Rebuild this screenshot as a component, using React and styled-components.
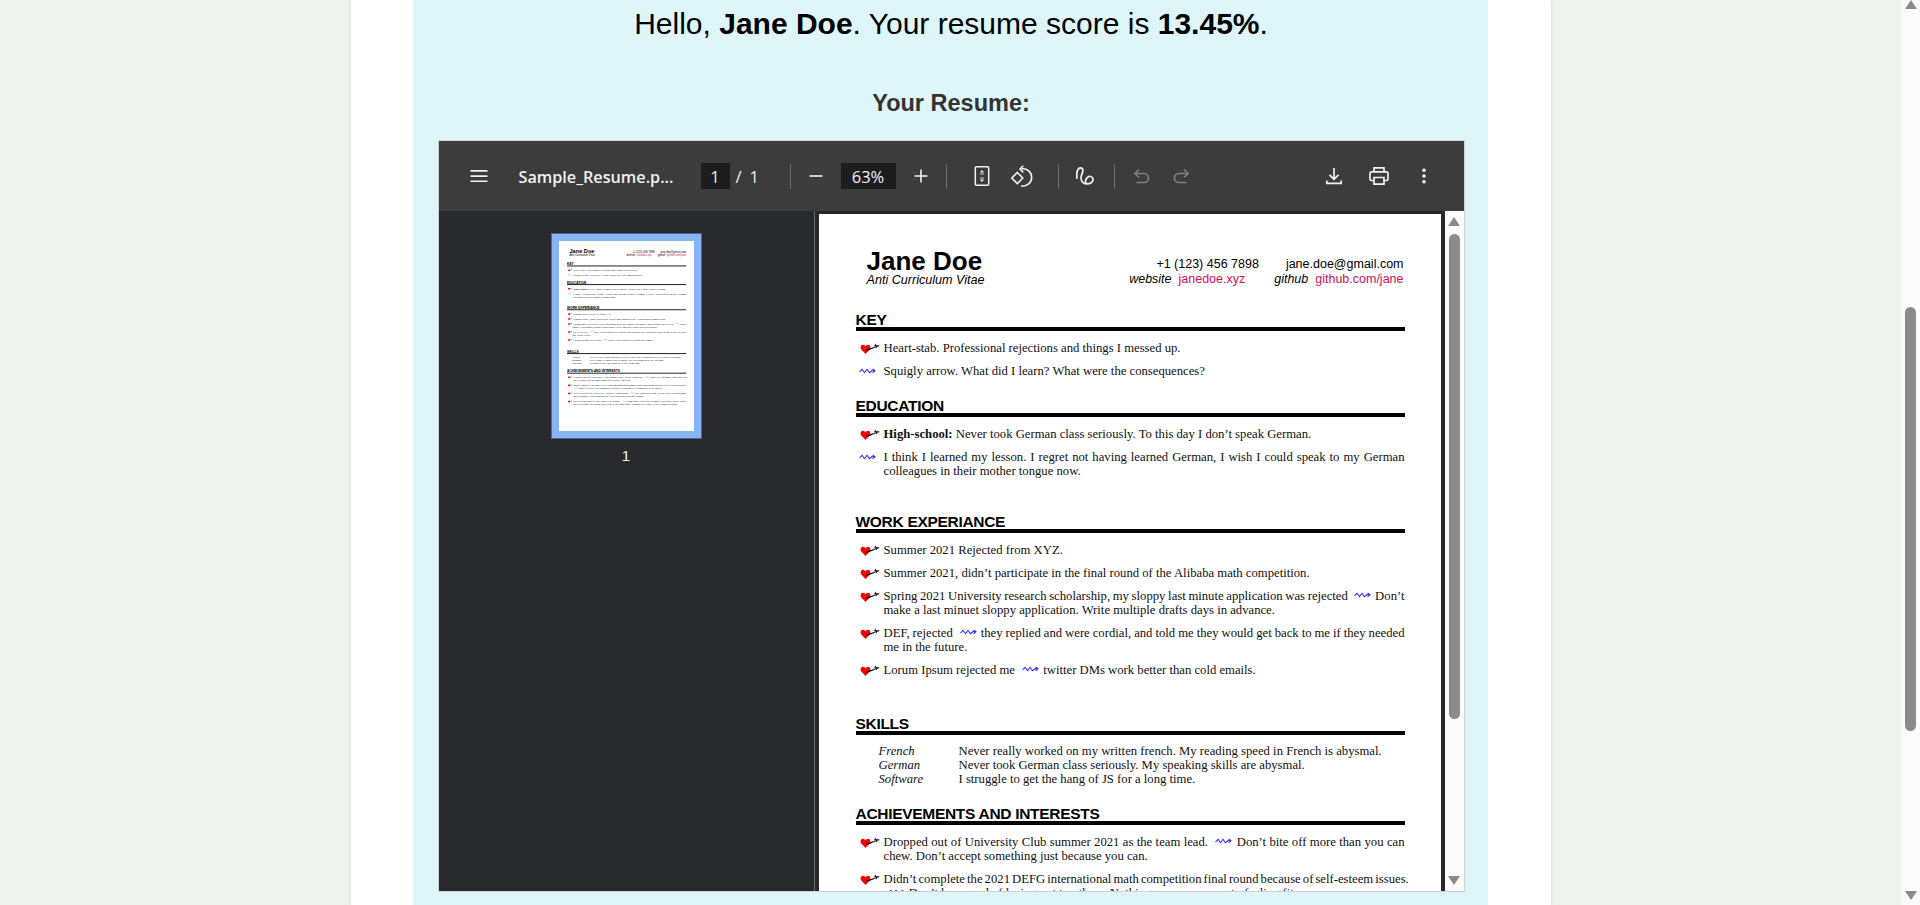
import React from 'react'
import styled, { createGlobalStyle } from 'styled-components'

const GlobalStyle = createGlobalStyle`
    html, body {
        margin: 0;
        padding: 0;
        height: 100%;
        overflow: hidden;
    }
    body {
        font-family: "Liberation Sans", Arial, sans-serif;
    }
`

const Heart = () => (
    <HeartSvg viewBox="0 0 20 14">
        <path d="M5.500 13 1.300 8.500C-.2 6.500.8 3.800 3 3.800c1.200 0 2 .8 2.500 1.800C6 4.600 6.800 3.800 8 3.800c2.200 0 3.200 2.700 1.700 4.700z" fill="#f40000" />
        <path d="M6.500 9.300 14 6.500" stroke="#000" strokeWidth="1.300" fill="none" />
        <path d="M14 6.500 19.300 4.700" stroke="#000" strokeWidth=".8" fill="none" />
        <path d="M15.300 2.800 16.700 7.200M13.800 4.800l4.800-.2" stroke="#000" strokeWidth=".8" fill="none" />
    </HeartSvg>
)

const Squiggle = ({ inline }) => (
    <SquiggleSvg viewBox="0 0 17 8" $inline={inline}>
        <path d="M.5 5 3 2.300 5.500 5.700 8 2.300 10.500 5.700 13 3.600 15.500 3.800" stroke="#2a22ff" strokeWidth="1.050" fill="none" />
        <path d="M13.600 1.800 16 3.800 13.600 5.800" stroke="#2a22ff" strokeWidth="1.050" fill="none" />
    </SquiggleSvg>
)

const HeartSvg = styled.svg`
    width: 20px;
    height: 14px;
    display: block;
`
const SquiggleSvg = styled.svg`
    width: 17px;
    height: 8px;
    display: ${(p) => (p.$inline ? 'inline-block' : 'block')};
    margin: ${(p) => (p.$inline ? '0 1px 1px 4px' : '3px 0 0 -1px')};
`

const ResumeBody = ({ full }) => (
    <>
        <Header>
            <NameBlock>
                <Name>Jane Doe</Name>
                <Tagline>Anti Curriculum Vitae</Tagline>
            </NameBlock>
            <Contact>
                <ContactRow $gap={27}>
                    <span>+1 (123) 456 7898</span>
                    <span>jane.doe@gmail.com</span>
                </ContactRow>
                <ContactRow $gap={29}>
                    <span><em>website</em>&nbsp; <Link>janedoe.xyz</Link></span>
                    <span><em>github</em>&nbsp; <Link>github.com/jane</Link></span>
                </ContactRow>
            </Contact>
        </Header>

        <SectionTitle $top={25}>KEY</SectionTitle>
        <Items>
            <Item><Heart /><ItemText>Heart-stab. Professional rejections and things I messed up.</ItemText></Item>
            <Item><Squiggle /><ItemText>Squigly arrow. What did I learn? What were the consequences?</ItemText></Item>
        </Items>

        <SectionTitle $top={21}>EDUCATION</SectionTitle>
        <Items>
            <Item><Heart /><ItemText><b>High-school:</b> Never took German class seriously. To this day I don’t speak German.</ItemText></Item>
            <Item><Squiggle /><ItemText>
                <Line>I think I learned my lesson. I regret not having learned German, I wish I could speak to my German</Line>
                colleagues in their mother tongue now.
            </ItemText></Item>
        </Items>

        <SectionTitle $top={37}>WORK EXPERIANCE</SectionTitle>
        <Items>
            <Item><Heart /><ItemText>Summer 2021 Rejected from XYZ.</ItemText></Item>
            <Item><Heart /><ItemText>Summer 2021, didn’t participate in the final round of the Alibaba math competition.</ItemText></Item>
            <Item><Heart /><ItemText>
                <Line>Spring 2021 University research scholarship, my sloppy last minute application was rejected <Squiggle inline /> Don’t</Line>
                make a last minuet sloppy application. Write multiple drafts days in advance.
            </ItemText></Item>
            <Item><Heart /><ItemText>
                <Line>DEF, rejected <Squiggle inline /> they replied and were cordial, and told me they would get back to me if they needed</Line>
                me in the future.
            </ItemText></Item>
            <Item><Heart /><ItemText>Lorum Ipsum rejected me <Squiggle inline /> twitter DMs work better than cold emails.</ItemText></Item>
        </Items>

        <SectionTitle $top={40}>SKILLS</SectionTitle>
        <SkillTable>
            <SkillName>French</SkillName><ItemText>Never really worked on my written french. My reading speed in French is abysmal.</ItemText>
            <SkillName>German</SkillName><ItemText>Never took German class seriously. My speaking skills are abysmal.</ItemText>
            <SkillName>Software</SkillName><ItemText>I struggle to get the hang of JS for a long time.</ItemText>
        </SkillTable>

        <SectionTitle $top={21}>ACHIEVEMENTS AND INTERESTS</SectionTitle>
        <Items>
            <Item><Heart /><ItemText>
                <Line>Dropped out of University Club summer 2021 as the team lead. <Squiggle inline /> Don’t bite off more than you can</Line>
                chew. Don’t accept something just because you can.
            </ItemText></Item>
            <Item><Heart /><ItemText>
                <Line $tight>Didn’t complete the 2021 DEFG international math competition final round because of self-esteem issues.</Line>
                <Squiggle inline /> Don’t be scared of losing out to others. Nothing ever compares to feeling fit.
            </ItemText></Item>
            {full && (
                <>
                    <Item><Heart /><ItemText>
                        <Line>Never applied for University entrance scholarship. <Squiggle inline /> Not worth the form, but my best was not good</Line>
                        and the money went through the first round and into their hands.
                    </ItemText></Item>
                    <Item><Heart /><ItemText>
                        <Line>Entered and played any contest in school. <Squiggle inline /> Sometimes you need to make sacrifices to get ahead</Line>
                        but read them everything you want at the same time. Though well liked it was a good decision.
                    </ItemText></Item>
                </>
            )}
        </Items>
    </>
)

const Toolbar = () => (
    <Bar>
        <IconBtn $mr={20}>
            <svg width="20" height="20" viewBox="0 0 20 20" fill="#f1f1f1"><path d="M1.500 4h17v1.700h-17zM1.500 9.200h17v1.700h-17zM1.500 14.400h17v1.700h-17z" /></svg>
        </IconBtn>
        <Title>Sample_Resume.p...</Title>
        <PageBox>1</PageBox>
        <PageSlash>/</PageSlash>
        <PageTotal>1</PageTotal>
        <Sep $ml={30} />
        <IconBtn $ml={5} $w={40}>
            <svg width="16" height="16" viewBox="0 0 16 16" fill="#f1f1f1"><path d="M1.500 7.200h13v1.600h-13z" /></svg>
        </IconBtn>
        <ZoomBox>63%</ZoomBox>
        <IconBtn $ml={5}>
            <svg width="16" height="16" viewBox="0 0 16 16" fill="#f1f1f1"><path d="M1.500 7.200h5.700V1.500h1.600v5.700h5.700v1.600H8.800v5.700H7.200V8.800H1.500z" /></svg>
        </IconBtn>
        <Sep $ml={5} />
        <IconBtn $ml={15}>
            <svg width="20" height="24" viewBox="0 0 20 24" fill="none" stroke="#f1f1f1" strokeWidth="1.500">
                <rect x="3.300" y="2.800" width="13.400" height="18.400" rx="1.300" />
                <path d="M10 6 7.800 8.600h4.400zM10 18 7.800 15.400h4.400z" fill="#f1f1f1" stroke="none" />
                <path d="M8 10h4M8 14h4" strokeWidth=".8" />
            </svg>
        </IconBtn>
        <IconBtn>
            <svg width="24" height="24" viewBox="0 0 24 24" fill="none" stroke="#f1f1f1" strokeWidth="1.600">
                <path d="M7.300 8.500 12.800 14 7.300 19.500 1.800 14z" />
                <path d="M11.500 4.900A8.600 8.600 0 1 1 11 21.700" />
                <path d="M13.300 1.800 10 5l3.300 3.400" />
            </svg>
        </IconBtn>
        <Sep $ml={16} />
        <IconBtn $ml={7}>
            <svg width="23" height="23" viewBox="0 0 20 20" fill="none" stroke="#f1f1f1" strokeWidth="1.500" strokeLinecap="round">
                <path d="M2.500 11.500C2 7 3 2.500 5.500 2.500 8.500 2.500 8 6 6.500 9 5 12 7 16.500 11 16.500c3.500 0 6-2 5.500-4.500-.5-2.500-3.500-2.500-5-1-1.500 1.500-2 3-1 5" />
            </svg>
        </IconBtn>
        <Sep $ml={8} />
        <IconBtn $ml={8} $w={39}>
            <svg width="20" height="20" viewBox="0 0 20 20" fill="none" stroke="#7f7f7f" strokeWidth="1.700">
                <path d="M7 3.500 3 7.500l4 4" />
                <path d="M3.500 7.500H12a4.500 4.500 0 0 1 0 9H4.500" />
            </svg>
        </IconBtn>
        <IconBtn $w={39}>
            <svg width="20" height="20" viewBox="0 0 20 20" fill="none" stroke="#7f7f7f" strokeWidth="1.700">
                <path d="M13 3.500l4 4-4 4" />
                <path d="M16.500 7.500H8a4.500 4.500 0 0 0 0 9h7.500" />
            </svg>
        </IconBtn>
        <RightTools>
            <IconBtn>
                <svg width="20" height="20" viewBox="0 0 20 20" fill="none" stroke="#f1f1f1" strokeWidth="1.700">
                    <path d="M10 2v11M5.500 8.800 10 13.300l4.500-4.500M2.800 14.500v2.800h14.400v-2.800" />
                </svg>
            </IconBtn>
            <IconBtn>
                <svg width="24" height="24" viewBox="0 0 24 24" fill="none" stroke="#f1f1f1" strokeWidth="1.700">
                    <path d="M7 7.800V3.800h10v4M7 16.500H4.500a1.500 1.500 0 0 1-1.500-1.500v-5.500a1.700 1.700 0 0 1 1.700-1.700h14.600a1.700 1.700 0 0 1 1.700 1.700V15a1.500 1.500 0 0 1-1.500 1.500H17" />
                    <path d="M7 13.500h10v6.700H7z" />
                </svg>
            </IconBtn>
            <IconBtn>
                <svg width="20" height="20" viewBox="0 0 20 20" fill="#f1f1f1"><circle cx="10" cy="4.300" r="1.800" /><circle cx="10" cy="10" r="1.800" /><circle cx="10" cy="15.700" r="1.800" /></svg>
            </IconBtn>
        </RightTools>
    </Bar>
)

const App = () => {
    return (
        <>
            <GlobalStyle />
            <Window>
                <Backdrop>
                    <Sheet>
                        <Panel>
                            <Score>Hello, <b>Jane Doe</b>. Your resume score is <b>13.45%</b>.</Score>
                            <Subtitle>Your Resume:</Subtitle>
                            <Embed>
                                <Toolbar />
                                <ViewerBody>
                                    <Sidebar>
                                        <ThumbFrame>
                                            <ThumbScale aria-hidden="true">
                                                <ResumeBody full />
                                            </ThumbScale>
                                        </ThumbFrame>
                                        <ThumbLabel>1</ThumbLabel>
                                    </Sidebar>
                                    <Viewport>
                                        <Paper>
                                            <ResumeBody />
                                        </Paper>
                                    </Viewport>
                                    <Scrollbar start={8} size={485} />
                                </ViewerBody>
                            </Embed>
                        </Panel>
                    </Sheet>
                </Backdrop>
                <Scrollbar start={298} size={424} page />
            </Window>
        </>
    )
}

const Scrollbar = ({ start, size, page }) => (
    <Track $page={page}>
        <ArrowUp />
        <Thumb style={{ marginTop: start, height: size }} />
        <TrackFill />
        <ArrowDown />
    </Track>
)

const Window = styled.div`
    display: flex;
    width: 100vw;
    height: 905px;
    overflow: hidden;
`
const Backdrop = styled.main`
    flex: 1;
    background: #eef3ef;
    display: flex;
    justify-content: center;
    min-width: 0;
`
const Sheet = styled.div`
    width: 1200px;
    flex: none;
    box-sizing: border-box;
    background: #fff;
    padding: 0 63px 0 62px;
    box-shadow: 0 0 3px rgba(0, 0, 0, 0.14);
`
const Panel = styled.section`
    background: #def6f9;
    height: 100%;
    box-sizing: border-box;
    padding: 0 23px 0 25px;
`
const Score = styled.h1`
    margin: 0;
    padding-top: 7px;
    font-size: 30px;
    line-height: 33px;
    font-weight: 400;
    text-align: center;
    color: #000;
`
const Subtitle = styled.h2`
    margin: 0;
    padding-top: 49px;
    font-size: 23.500px;
    line-height: 28px;
    font-weight: 700;
    text-align: center;
    color: #333;
`
const Embed = styled.div`
    margin-top: 23px;
    height: 750px;
    border: 1px solid #cfcfcf;
    display: flex;
    flex-direction: column;
    overflow: hidden;
    background: #282828;
`
const Bar = styled.div`
    flex: none;
    height: 70px;
    display: flex;
    align-items: center;
    padding: 0 20px;
    background: #3c3c3c;
    color: #f1f1f1;
    font-family: "Open Sans", "Noto Sans", sans-serif;
`
const IconBtn = styled.div`
    flex: none;
    width: ${(p) => p.$w || 40}px;
    height: 36px;
    margin-left: ${(p) => p.$ml || 0}px;
    margin-right: ${(p) => p.$mr || 0}px;
    display: flex;
    align-items: center;
    justify-content: center;
`
const Title = styled.div`
    width: 156px;
    flex: none;
    padding-top: 1px;
    font-size: 16.200px;
    font-weight: 600;
    white-space: nowrap;
`
const PageBox = styled.div`
    flex: none;
    width: 29px;
    height: 26px;
    margin-left: 26px;
    background: #1d1d1d;
    display: flex;
    align-items: center;
    justify-content: center;
    font-size: 16.500px;
`
const PageSlash = styled.div`
    flex: none;
    width: 12px;
    margin-left: 3px;
    text-align: center;
    font-size: 16.500px;
`
const PageTotal = styled.div`
    flex: none;
    width: 10px;
    margin-left: 5px;
    font-size: 16.500px;
`
const Sep = styled.div`
    flex: none;
    width: 1px;
    height: 25px;
    margin-left: ${(p) => p.$ml || 0}px;
    background: #6d6d6d;
`
const ZoomBox = styled.div`
    flex: none;
    width: 55px;
    height: 26px;
    margin-left: 5px;
    background: #1d1d1d;
    display: flex;
    align-items: center;
    justify-content: center;
    font-size: 16.500px;
`
const RightTools = styled.div`
    margin-left: auto;
    display: flex;
    gap: 5px;
`
const ViewerBody = styled.div`
    flex: 1;
    min-height: 0;
    display: flex;
`
const Sidebar = styled.aside`
    flex: none;
    width: 375px;
    border-right: 1px solid #6a6a6a;
    background: #28292b;
    display: flex;
    flex-direction: column;
    align-items: center;
    padding-top: 22px;
`
const ThumbFrame = styled.div`
    width: 135px;
    height: 190px;
    background: #fff;
    border: 8px solid #8ab4f8;
    outline: 1px solid #4f6a96;
    outline-offset: -1px;
    overflow: hidden;
`
const ThumbScale = styled.div`
    width: 622px;
    height: 875px;
    transform: scale(0.217);
    transform-origin: 0 0;
`
const ThumbLabel = styled.div`
    margin-top: 8px;
    font-size: 15px;
    line-height: 18px;
    color: #f1f1f1;
`
const Viewport = styled.div`
    flex: 1;
    min-width: 0;
    background: #282828;
    padding: 3px 4px 0;
    overflow: hidden;
`
const Paper = styled.div`
    background: #fff;
    width: 622px;
    height: 875px;
`
const Track = styled.div`
    flex: none;
    width: 19px;
    height: 100%;
    box-sizing: border-box;
    background: #fbfbfb;
    display: flex;
    flex-direction: column;
    align-items: center;
    padding: ${(p) => (p.$page ? 0 : 6)}px 0 ${(p) => (p.$page ? 5 : 6)}px;
`
const ArrowUp = styled.div`
    flex: none;
    width: 0;
    height: 0;
    border-left: 6.500px solid transparent;
    border-right: 6.500px solid transparent;
    border-bottom: 9px solid #8b8b8b;
`
const ArrowDown = styled.div`
    flex: none;
    width: 0;
    height: 0;
    border-left: 6.500px solid transparent;
    border-right: 6.500px solid transparent;
    border-top: 9px solid #8b8b8b;
`
const Thumb = styled.div`
    flex: none;
    width: 11px;
    border-radius: 6px;
    background: #8b8b8b;
`
const TrackFill = styled.div`
    flex: 1;
`
const Header = styled.header`
    display: flex;
    justify-content: space-between;
    padding: 35px 37px 0 48px;
    color: #000;
`
const NameBlock = styled.div`
    display: flex;
    flex-direction: column;
`
const Name = styled.div`
    font-size: 26px;
    line-height: 24px;
    font-weight: 700;
`
const Tagline = styled.div`
    font-size: 12.600px;
    line-height: 15px;
    font-style: italic;
`
const Contact = styled.div`
    display: flex;
    flex-direction: column;
    padding-top: 8px;
    font-size: 12.500px;
    line-height: 15px;
`
const ContactRow = styled.div`
    display: flex;
    justify-content: flex-end;
    gap: ${(p) => p.$gap}px;
`
const Link = styled.span`
    color: #d00f5a;
`
const SectionTitle = styled.h3`
    margin: ${(p) => p.$top}px 36px 0 37px;
    border-bottom: 4px solid #000;
    font-size: 15.500px;
    letter-spacing: -0.3px;
    line-height: 14px;
    font-weight: 700;
    color: #000;
`
const Items = styled.div`
    margin: 10px 36px 0 41px;
    display: flex;
    flex-direction: column;
    gap: 9px;
`
const Item = styled.div`
    display: grid;
    grid-template-columns: 24px 1fr;
    align-items: start;
`
const ItemText = styled.div`
    font-family: "Liberation Serif", "Times New Roman", serif;
    font-size: 12.700px;
    line-height: 14px;
    color: #111;
`
const Line = styled.span`
    display: block;
    white-space: nowrap;
    word-spacing: ${(p) => (p.$tight ? '-1.1px' : '-0.7px')};
    text-align: justify;
    text-align-last: justify;
`
const SkillTable = styled.div`
    margin: 9px 36px 0 60px;
    display: grid;
    grid-template-columns: 80px 1fr;
`
const SkillName = styled(ItemText)`
    font-style: italic;
`

export default App
